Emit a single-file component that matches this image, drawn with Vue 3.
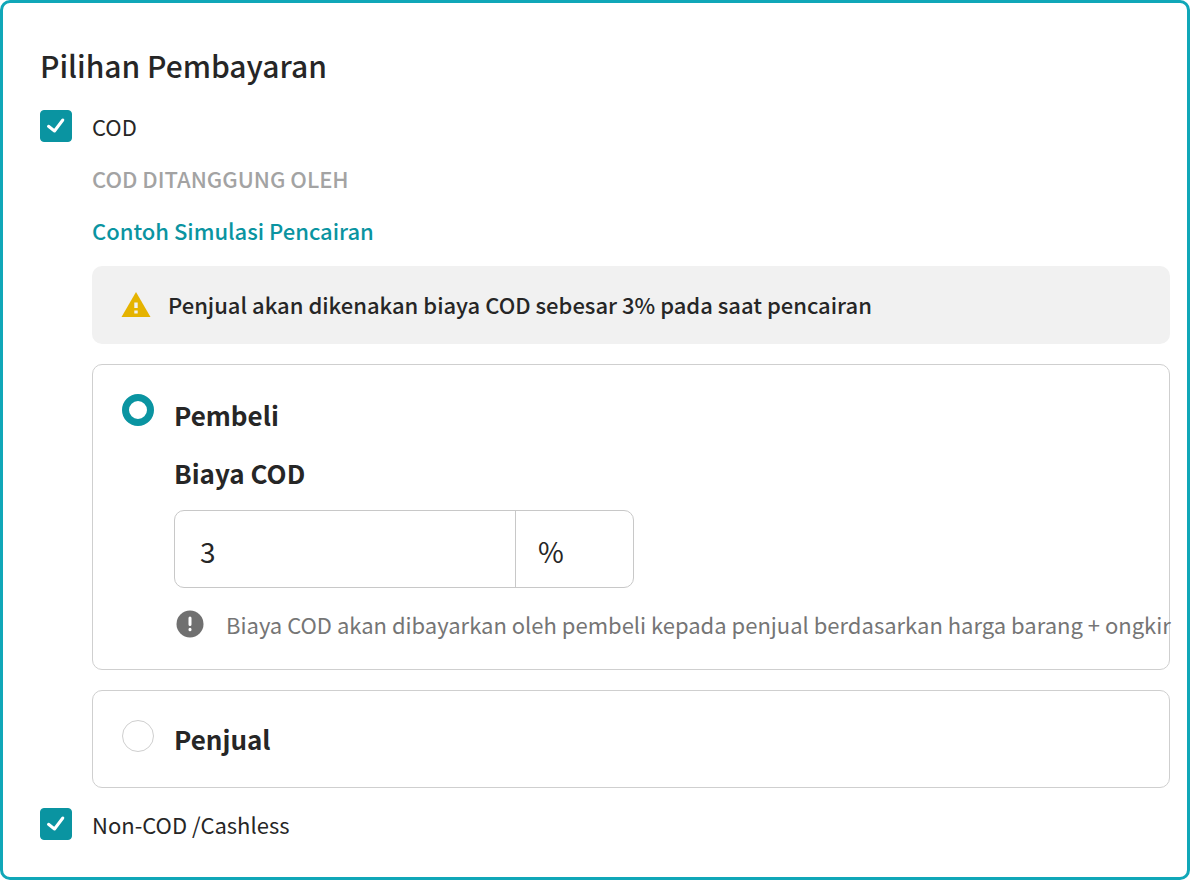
<script setup>
import { ref } from 'vue'

const cod = ref(true)
const cashless = ref(true)
const payer = ref('pembeli')
const fee = ref('3')
</script>

<template>
  <main class="panel">
    <h1 class="title">Pilihan Pembayaran</h1>

    <label class="option">
      <span class="check">
        <input v-model="cod" type="checkbox" />
        <svg v-if="cod" viewBox="0 0 32 32" aria-hidden="true"><path d="M8.500 16.300L14.500 21L22.800 10" /></svg>
      </span>
      <span>COD</span>
    </label>

    <section class="details">
      <h2 class="caption">COD DITANGGUNG OLEH</h2>
      <a class="link" href="#simulasi">Contoh Simulasi Pencairan</a>

      <p class="notice">
        <svg class="warning" viewBox="0 0 32 32" aria-hidden="true">
          <path d="M16 4L30.500 29H1.500Z" fill="#e5b300" />
          <path d="M14.300 14.500h3.400v5.500h-3.400zM14.300 22.500h3.400v3h-3.400z" fill="#f1f1f1" />
        </svg>
        <span>Penjual akan dikenakan biaya COD sebesar 3% pada saat pencairan</span>
      </p>

      <div class="card">
        <input id="pembeli" v-model="payer" class="radio" type="radio" name="payer" value="pembeli" />
        <div class="body">
          <label class="name tall" for="pembeli">Pembeli</label>
          <label class="name field-name" for="fee">Biaya COD</label>
          <div class="field">
            <input id="fee" v-model="fee" type="text" inputmode="numeric" />
            <span class="unit">%</span>
          </div>
          <p class="hint">
            <svg viewBox="0 0 32 32" aria-hidden="true">
              <circle cx="16" cy="16" r="13.500" fill="#707070" />
              <path d="M16 10v6.500M16 21.200v.6" stroke="#fff" stroke-width="3" stroke-linecap="round" />
            </svg>
            <span>Biaya COD akan dibayarkan oleh pembeli kepada penjual berdasarkan harga barang + ongkir</span>
          </p>
        </div>
      </div>

      <div class="card">
        <input id="penjual" v-model="payer" class="radio" type="radio" name="payer" value="penjual" />
        <label class="name" for="penjual">Penjual</label>
      </div>
    </section>

    <label class="option">
      <span class="check">
        <input v-model="cashless" type="checkbox" />
        <svg v-if="cashless" viewBox="0 0 32 32" aria-hidden="true"><path d="M8.500 16.300L14.500 21L22.800 10" /></svg>
      </span>
      <span>Non-COD /Cashless</span>
    </label>
  </main>
</template>

<style>
body {
  background: #fff;
}
</style>

<style scoped>
.panel {
  box-sizing: border-box;
  min-height: 100vh;
  display: flex;
  flex-direction: column;
  gap: 20px;
  padding: 37px 17px 37px 37px;
  border: 3px solid #10a7b8;
  border-radius: 10px;
  background: #fff;
  color: #262626;
  font: 400 22px/32px "Noto Sans CJK JP", "Noto Sans", sans-serif;
}

h1,
h2,
p {
  margin: 0;
}

input {
  appearance: none;
  margin: 0;
  font: inherit;
  color: inherit;
}

.title {
  font-size: 30px;
  font-weight: 500;
  line-height: 50px;
}

.option {
  display: flex;
  gap: 20px;
}

.check {
  display: grid;
  width: 32px;
  height: 32px;
}

.check > * {
  grid-area: 1 / 1;
}

.check input {
  border: 1px solid #c8c8c8;
  border-radius: 4px;
}

.check input:checked {
  border-color: #0a94a1;
  background: #0a94a1;
}

.check svg {
  fill: none;
  stroke: #fff;
  stroke-width: 3;
  stroke-linecap: round;
  stroke-linejoin: round;
  pointer-events: none;
}

.details {
  display: flex;
  flex-direction: column;
  gap: 20px;
  margin-left: 52px;
}

.caption {
  color: #a3a3a3;
  font-size: 22px;
  font-weight: 500;
}

.link {
  align-self: flex-start;
  color: #0a94a1;
  font-weight: 500;
  text-decoration: none;
}

.notice {
  display: flex;
  gap: 16px;
  padding: 22px 28px 24px;
  border-radius: 10px;
  background: #f1f1f1;
  font-weight: 500;
}

.warning {
  flex: none;
  width: 32px;
  height: 32px;
}

.card {
  display: flex;
  align-items: flex-start;
  gap: 20px;
  padding: 29px;
  border: 1px solid #cfcfcf;
  border-radius: 10px;
}

.radio {
  flex: none;
  box-sizing: border-box;
  width: 32px;
  height: 32px;
  border: 1px solid #cfcfcf;
  border-radius: 50%;
}

.radio:checked {
  border: 7px solid #0a94a1;
}

.body {
  flex: 1;
  min-width: 0;
  display: flex;
  flex-direction: column;
  align-items: flex-start;
  gap: 20px;
}

.name {
  font-size: 26px;
  font-weight: 700;
  line-height: 38px;
}

.name.tall {
  padding-top: 2px;
}

.name.field-name {
  padding-top: 2px;
  line-height: 34px;
}

.field {
  box-sizing: border-box;
  display: flex;
  width: 460px;
  max-width: 100%;
  border: 1px solid #c8c8c8;
  border-radius: 10px;
  font-size: 28px;
  line-height: 40px;
}

.field input {
  flex: 1;
  min-width: 0;
  height: 76px;
  box-sizing: border-box;
  padding: 20px 25px 16px;
  border: 0;
  outline: 0;
  background: transparent;
}

.unit {
  box-sizing: border-box;
  width: 118px;
  padding: 20px 22px 16px;
  border-left: 1px solid #c8c8c8;
}

.hint {
  display: flex;
  gap: 20px;
  color: #757575;
  white-space: nowrap;
}

.hint svg {
  flex: none;
  width: 32px;
  height: 32px;
}
</style>
